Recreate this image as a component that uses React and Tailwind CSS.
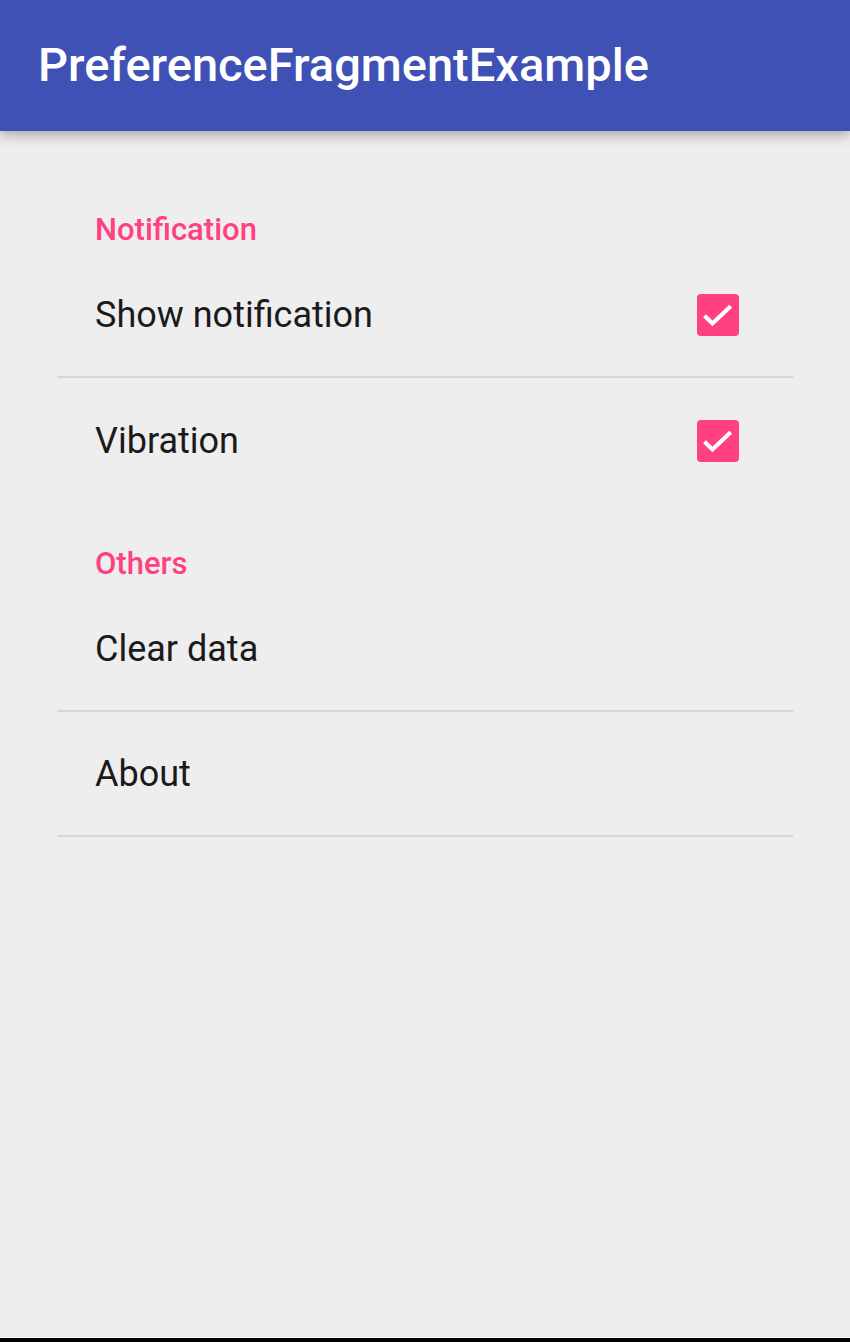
import React from "react";

// Small pink checkbox drawn like the Android material one
function CheckBox() {
  return (
    <div className="w-[42px] h-[42px] rounded-[4px] bg-[#ff4081] flex items-center justify-center">
      <svg width="38" height="38" viewBox="0 0 24 24" fill="none">
        <path d="M3.5 12.5l5 4.8L20 6.5" stroke="white" strokeWidth="2.6" />
      </svg>
    </div>
  );
}

function Category({ title }) {
  return (
    <div className="h-[84px] flex items-end pb-[8px] pl-[38px]">
      <span className="text-[31px] leading-[30px] font-medium text-[#ff4081]">{title}</span>
    </div>
  );
}

function Row({ title, checked, divider }) {
  return (
    <div
      className={
        "h-[125px] flex items-center justify-between pl-[38px] pr-[54px] " +
        (divider ? "border-b-2 border-[#d6d6d6]" : "")
      }
    >
      <span className="text-[36px] text-[#1a1a1a]">{title}</span>
      {checked && <CheckBox />}
    </div>
  );
}

export default function App() {
  return (
    <div
      className="min-h-screen h-[1342px] flex flex-col bg-[#eeeeee]"
      style={{ fontFamily: "Roboto, 'Noto Sans', sans-serif" }}
    >
      {/* Toolbar */}
      <div className="h-[131px] bg-[#3f51b5] flex items-center pl-[38px] shadow-[0_4px_12px_rgba(0,0,0,0.3)] relative z-10">
        <h1 className="text-white text-[47px] font-medium">PreferenceFragmentExample</h1>
      </div>

      {/* Preference list */}
      <div className="flex-1 pt-[38px] px-[57px]">
        <Category title="Notification" />
        <Row title="Show notification" checked divider />
        <Row title="Vibration" checked />
        <Category title="Others" />
        <Row title="Clear data" divider />
        <Row title="About" divider />
      </div>

      <div className="h-[1px] bg-white" />
      <div className="h-[4px] bg-black" />
    </div>
  );
}
